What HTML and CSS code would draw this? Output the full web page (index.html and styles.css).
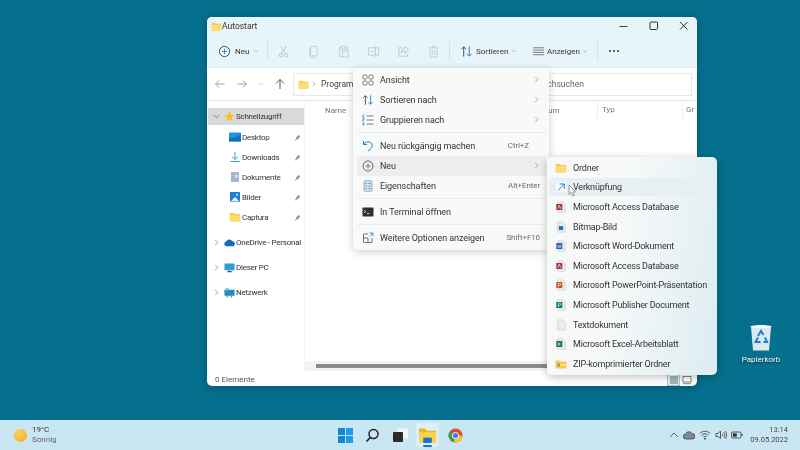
FILE: index.html
```html
<!DOCTYPE html>
<html lang="de">
<head>
<meta charset="utf-8">
<title>Autostart</title>
<link rel="stylesheet" href="styles.css">
</head>
<body>
<svg class="defs" width="0" height="0">
  <symbol id="folder" viewBox="0 0 16 16"><path d="M1 3.500A1 1 0 0 1 2 2.500h4l2 1.600h6a1 1 0 0 1 1 1V13a1 1 0 0 1-1 1H2a1 1 0 0 1-1-1z" fill="#f6c94e"/><path d="M1 5.600h14V13a1 1 0 0 1-1 1H2a1 1 0 0 1-1-1z" fill="#fcdc74"/></symbol>
  <symbol id="pin" viewBox="0 0 10 10"><path d="M6 1l3 3-1 .5-1.600 1.600-.2 2L4.900 7 2.500 9l-1 .2L1.800 8 3.800 5.500 2.600 4.200l2-.2L5.800 2.200z" fill="#8b8f92"/></symbol>
  <symbol id="chev" viewBox="0 0 8 8"><path d="M2.500 1l3 3-3 3" fill="none" stroke="#8a8a8a" stroke-width=".8"/></symbol>
  <symbol id="sort" viewBox="0 0 14 14"><path d="M4 12.500V2M1.500 4.500L4 2l2.500 2.500" fill="none" stroke="#444" stroke-width="1"/><path d="M10 1.500V12M7.500 9.500L10 12l2.500-2.500" fill="none" stroke="#1784c9" stroke-width="1"/></symbol>
  <symbol id="file" viewBox="0 0 14 14"><path d="M3 1h6l3 3v9H3z" fill="#e9ecef" stroke="#c5cacd" stroke-width=".6"/></symbol>
</svg>
<div class="desktop">
  <section class="window">
    <header class="titlebar">
      <svg class="ico11"><use href="#folder"/></svg>
      <span class="title">Autostart</span>
      <div class="winctrls">
        <svg class="ico12" viewBox="0 0 12 12"><path d="M1.500 6.500h8" stroke="#444" stroke-width="1"/></svg>
        <svg class="ico12" viewBox="0 0 12 12"><rect x="2" y="2" width="7.500" height="7.500" rx="1" fill="none" stroke="#333" stroke-width="1"/></svg>
        <svg class="ico12" viewBox="0 0 12 12"><path d="M2 2l7.500 7.500M9.500 2L2 9.500" stroke="#333" stroke-width="1"/></svg>
      </div>
    </header>
    <div class="toolbar">
      <div class="tool new">
        <svg class="ico13" viewBox="0 0 14 14"><circle cx="7" cy="7" r="5.500" fill="none" stroke="#333" stroke-width=".9"/><path d="M7 4.200v5.600M4.200 7h5.600" stroke="#1177bb" stroke-width=".9"/></svg>
        <span>Neu</span><svg class="caret" viewBox="0 0 8 8"><path d="M1.500 3l2.500 2.500L6.500 3" fill="none" stroke="#999" stroke-width=".8"/></svg>
      </div>
      <i class="vsep"></i>
      <div class="disabled">
        <svg class="ico13" viewBox="0 0 14 14"><circle cx="4" cy="11" r="1.800" fill="none" stroke="#a9c4d2"/><circle cx="10" cy="11" r="1.800" fill="none" stroke="#a9c4d2"/><path d="M4.800 9.500L10 1.500M9.200 9.500L4 1.500" stroke="#a9c4d2" fill="none"/></svg>
        <svg class="ico13" viewBox="0 0 14 14"><rect x="4" y="1.500" width="7" height="10" rx="2" fill="none" stroke="#b4ccd8"/><path d="M3 3.500v8.500a1 1 0 0 0 1 1h5" fill="none" stroke="#b4ccd8"/></svg>
        <svg class="ico13" viewBox="0 0 14 14"><path d="M4.500 3H2.500v9.500h3M9.500 3h2v3" fill="none" stroke="#b4ccd8"/><rect x="4.500" y="1.500" width="5" height="3" fill="none" stroke="#b4ccd8"/><rect x="6" y="6.500" width="6" height="6.500" fill="none" stroke="#b4ccd8"/></svg>
        <svg class="ico13" viewBox="0 0 14 14"><path d="M9 3H1.500v8H9M9 1v12M9 3h3.500v8H9" fill="none" stroke="#b4ccd8"/><path d="M4 7h3" stroke="#b4ccd8"/></svg>
        <svg class="ico13" viewBox="0 0 14 14"><path d="M5.500 3H2v9h9V9M8.500 1.500l4 3.500-4 3.500V6.500C6.500 6.500 5 7.500 4.500 9 4.500 6 6 3.800 8.500 3.500z" fill="none" stroke="#a9c8da"/></svg>
        <svg class="ico13" viewBox="0 0 14 14"><path d="M2 3h10M5.500 3V1.500h3V3M3 3l.5 10h7L11 3M5.700 5.500v5M8.300 5.500v5" fill="none" stroke="#b4ccd8"/></svg>
      </div>
      <i class="vsep"></i>
      <div class="tool sorttool">
        <svg class="ico13"><use href="#sort"/></svg><span>Sortieren</span><svg class="caret" viewBox="0 0 8 8"><path d="M1.500 3l2.500 2.500L6.500 3" fill="none" stroke="#999" stroke-width=".8"/></svg>
      </div>
      <div class="tool view">
        <svg class="ico13" viewBox="0 0 14 14"><path d="M1 3h12M1 5.500h12M1 8h12M1 10.500h12" stroke="#555" stroke-width=".8"/></svg><span>Anzeigen</span><svg class="caret" viewBox="0 0 8 8"><path d="M1.500 3l2.500 2.500L6.500 3" fill="none" stroke="#999" stroke-width=".8"/></svg>
      </div>
      <i class="vsep"></i>
      <span class="more"><i></i><i></i><i></i></span>
    </div>
    <nav class="addressrow">
      <svg class="navico faint" viewBox="0 0 12 12"><path d="M10.500 6H1.500M5 2.500L1.500 6 5 9.500" fill="none" stroke="#999" stroke-width=".9"/></svg>
      <svg class="navico faint" viewBox="0 0 12 12"><path d="M1.500 6h9M7 2.500L10.500 6 7 9.500" fill="none" stroke="#999" stroke-width=".9"/></svg>
      <svg class="navcaret" viewBox="0 0 8 8"><path d="M1.500 3l2.500 2.500L6.500 3" fill="none" stroke="#aaa" stroke-width=".8"/></svg>
      <svg class="navico" viewBox="0 0 12 12"><path d="M6 11V1.500M2 5.500l4-4 4 4" fill="none" stroke="#555" stroke-width="1"/></svg>
      <div class="addressbox">
        <svg class="ico11 boxfolder"><use href="#folder"/></svg>
        <svg class="crumb"><use href="#chev"/></svg>
        <span>Programme</span>
        <span class="search">Autostart durchsuchen</span>
      </div>
    </nav>
    <div class="body">
      <aside class="sidebar">
        <div class="tree quick">
          <svg class="treechev" viewBox="0 0 8 8"><path d="M1 2.500l3 3 3-3" fill="none" stroke="#555" stroke-width=".8"/></svg>
          <svg class="ico11" viewBox="0 0 12 12"><path d="M6 .8l1.600 3.400 3.700.5-2.700 2.600.7 3.700L6 9.200 2.700 11l.7-3.700L.7 4.700l3.700-.5z" fill="#f9bf1f"/></svg>
          <span>Schnellzugriff</span>
        </div>
        <div class="sub">
          <svg class="ico12" viewBox="0 0 12 12"><rect x="0" y="1.500" width="12" height="9" rx=".8" fill="#2196d6"/><path d="M0 7c4 0 8-1 12-4v7.500H0z" fill="#0f73b8"/></svg>
          <span>Desktop</span><svg class="pin"><use href="#pin"/></svg>
        </div>
        <div class="sub">
          <svg class="ico12" viewBox="0 0 12 12"><path d="M6 1v7M3 5.500L6 8.500l3-3" fill="none" stroke="#2aa3b8" stroke-width="1"/><path d="M1.500 10.500h9" stroke="#2aa3b8" stroke-width="1.200"/></svg>
          <span>Downloads</span><svg class="pin"><use href="#pin"/></svg>
        </div>
        <div class="sub">
          <svg class="ico12" viewBox="0 0 12 12"><rect x="2" y="1" width="8" height="10" rx=".6" fill="#a6b7cc"/><rect x="6" y="4" width="2.500" height="2.500" fill="#e4e9f0"/></svg>
          <span>Dokumente</span><svg class="pin"><use href="#pin"/></svg>
        </div>
        <div class="sub">
          <svg class="ico12" viewBox="0 0 12 12"><rect x="1" y="1" width="10" height="10" rx="1" fill="#1f7fd0"/><path d="M1.500 10.500L6 6l4.500 4.500z" fill="#e3f0fb"/><circle cx="8" cy="3.800" r="1" fill="#e3f0fb"/></svg>
          <span>Bilder</span><svg class="pin"><use href="#pin"/></svg>
        </div>
        <div class="sub">
          <svg class="ico12"><use href="#folder"/></svg>
          <span>Captura</span><svg class="pin"><use href="#pin"/></svg>
        </div>
        <div class="tree far">
          <svg class="treechev" viewBox="0 0 8 8"><path d="M2.500 1l3 3-3 3" fill="none" stroke="#777" stroke-width=".8"/></svg>
          <svg class="ico11" viewBox="0 0 12 12"><path d="M3 10a2.500 2.500 0 0 1-.4-5A3.500 3.500 0 0 1 9 4.600 2.700 2.700 0 0 1 9.300 10z" fill="#0f6cc0"/></svg>
          <span>OneDrive - Personal</span>
        </div>
        <div class="tree far">
          <svg class="treechev" viewBox="0 0 8 8"><path d="M2.500 1l3 3-3 3" fill="none" stroke="#777" stroke-width=".8"/></svg>
          <svg class="ico11" viewBox="0 0 12 12"><rect x=".5" y="1.500" width="11" height="7.500" rx=".6" fill="#2a9fd6"/><path d="M3.500 10.500h5" stroke="#46606e" stroke-width="1.200"/><path d="M5.500 9h1v1.500h-1z" fill="#46606e"/></svg>
          <span>Dieser PC</span>
        </div>
        <div class="tree far">
          <svg class="treechev" viewBox="0 0 8 8"><path d="M2.500 1l3 3-3 3" fill="none" stroke="#777" stroke-width=".8"/></svg>
          <svg class="ico11" viewBox="0 0 12 12"><rect x=".5" y="3" width="11" height="6.500" rx=".5" fill="#1e8fc6"/><rect x="2" y="1" width="3" height="3" fill="#6fbfe3"/><path d="M3.500 9.500v2M8 9.500v2" stroke="#46606e"/></svg>
          <span>Netzwerk</span>
        </div>
      </aside>
      <main class="files">
        <div class="columns">
          <span class="colname">Name</span>
          <span class="coldate">um</span>
          <span class="coltype">Typ</span>
          <span class="colsize">Gr</span>
        </div>
        <div class="scrollarea"></div>
        <div class="hscroll"><i></i></div>
      </main>
    </div>
    <footer class="status">
      <span>0 Elemente</span>
      <div class="viewbtns">
        <span class="viewon"><svg class="ico10" viewBox="0 0 10 10"><path d="M1 2h8M1 4h8M1 6h8M1 8h8" stroke="#555" stroke-width=".8"/></svg></span>
        <span class="viewoff"><svg class="ico10" viewBox="0 0 10 10"><rect x="1" y="1.500" width="8" height="5.500" fill="none" stroke="#666" stroke-width=".8"/><path d="M1 8.700h8" stroke="#666" stroke-width=".8"/></svg></span>
      </div>
    </footer>
  </section>

  <div class="menu">
    <div class="mrow"><svg class="mico" viewBox="0 0 12 12"><g fill="none" stroke="#555" stroke-width=".8"><rect x="1" y="1" width="4" height="4" rx="1.300"/><rect x="7" y="1" width="4" height="4" rx="1.300"/><rect x="1" y="7" width="4" height="4" rx="1.300"/><rect x="7" y="7" width="4" height="4" rx="1.300"/></g></svg><span class="mtext">Ansicht</span><svg class="mchev"><use href="#chev"/></svg></div>
    <div class="mrow"><svg class="mico"><use href="#sort"/></svg><span class="mtext">Sortieren nach</span><svg class="mchev"><use href="#chev"/></svg></div>
    <div class="mrow"><svg class="mico" viewBox="0 0 12 12"><path d="M4.500 2h7M4.500 6h7M4.500 10h7" stroke="#555" stroke-width=".8"/><path d="M2.500 1H1v3h1.500M2.500 5H1v3M2.500 9H1v2h1.500" fill="none" stroke="#1784c9" stroke-width=".8"/></svg><span class="mtext">Gruppieren nach</span><svg class="mchev"><use href="#chev"/></svg></div>
    <hr class="msep">
    <div class="mrow"><svg class="mico" viewBox="0 0 12 12"><path d="M1.500 1v3.500H5" fill="none" stroke="#1784c9"/><path d="M1.700 4.300C3 2.500 5 1.500 7.500 2c3 .7 3.500 4.500 1.500 6.500L6 11" fill="none" stroke="#1784c9"/></svg><span class="mtext">Neu rückgängig machen</span><span class="kbd undo">Ctrl+Z</span></div>
    <div class="mrow hover"><svg class="mico" viewBox="0 0 12 12"><circle cx="6" cy="6" r="5" fill="none" stroke="#444" stroke-width=".8"/><path d="M6 3.500v5M3.500 6h5" stroke="#1177bb" stroke-width=".8"/></svg><span class="mtext">Neu</span><svg class="mchev"><use href="#chev"/></svg></div>
    <div class="mrow"><svg class="mico" viewBox="0 0 12 12"><rect x="2" y=".8" width="8" height="10.400" rx=".8" fill="#d8e6f2" stroke="#6f93ae" stroke-width=".7"/><path d="M3.500 3.500h1.500M6.500 3.500h2M3.500 6h1.500M6.500 6h2M3.500 8.500h1.500M6.500 8.500h2" stroke="#1e77b8" stroke-width=".8"/></svg><span class="mtext">Eigenschaften</span><span class="kbd">Alt+Enter</span></div>
    <hr class="msep">
    <div class="mrow"><svg class="mico" viewBox="0 0 12 12"><rect x=".5" y="1.500" width="11" height="9" rx=".7" fill="#2d3035"/><path d="M2 4l1.800 1.500L2 7M5 7.500h2.500" fill="none" stroke="#e8e8e8" stroke-width=".8"/></svg><span class="mtext">In Terminal öffnen</span></div>
    <hr class="msep">
    <div class="mrow"><svg class="mico" viewBox="0 0 12 12"><path d="M6 2H1.500v8.500H10V6M1.500 6H6v4.500" fill="none" stroke="#555" stroke-width=".8"/><path d="M7.500 1h3.500v3.500M11 1L7.500 4.500" fill="none" stroke="#1784c9" stroke-width=".8"/></svg><span class="mtext">Weitere Optionen anzeigen</span><span class="kbd">Shift+F10</span></div>
  </div>

  <div class="submenu">
    <div class="srow"><svg class="sico"><use href="#folder"/></svg><span>Ordner</span></div>
    <div class="srow hover"><svg class="sico" viewBox="0 0 12 12"><rect x="1" y="1" width="10" height="10" fill="#f7fbfd"/><path d="M3 9.500L9 3.500M4.500 3H9.300v4.800" fill="none" stroke="#1784c9" stroke-width="1"/></svg><span>Verknüpfung</span></div>
    <div class="srow"><svg class="sico" viewBox="0 0 14 14"><use href="#file"/><rect x="1.500" y="3.500" width="7" height="7" fill="#a4373a"/><path d="M3.300 9L5 5l1.700 4" fill="none" stroke="#fff" stroke-width=".8"/></svg><span>Microsoft Access Database</span></div>
    <div class="srow"><svg class="sico" viewBox="0 0 14 14"><use href="#file"/><rect x="4.500" y="6" width="5" height="4.500" fill="#1d6fb8"/></svg><span>Bitmap-Bild</span></div>
    <div class="srow"><svg class="sico" viewBox="0 0 14 14"><use href="#file"/><rect x="1.500" y="3.500" width="7" height="7" fill="#2b64b4"/><path d="M3 5.500l1 3.500 1-2.500 1 2.500 1-3.500" fill="none" stroke="#fff" stroke-width=".6"/></svg><span>Microsoft Word-Dokument</span></div>
    <div class="srow"><svg class="sico" viewBox="0 0 14 14"><use href="#file"/><rect x="1.500" y="3.500" width="7" height="7" fill="#a4373a"/><path d="M3.300 9L5 5l1.700 4" fill="none" stroke="#fff" stroke-width=".8"/></svg><span>Microsoft Access Database</span></div>
    <div class="srow"><svg class="sico" viewBox="0 0 14 14"><use href="#file"/><rect x="1.500" y="3.500" width="7" height="7" fill="#c8502b"/><path d="M4 9.500V5h1.500a1.200 1.200 0 0 1 0 2.500H4" fill="none" stroke="#fff" stroke-width=".7"/></svg><span>Microsoft PowerPoint-Präsentation</span></div>
    <div class="srow"><svg class="sico" viewBox="0 0 14 14"><use href="#file"/><rect x="1.500" y="3.500" width="7" height="7" fill="#0d7a80"/><path d="M4 9.500V5h1.500a1.200 1.200 0 0 1 0 2.500H4" fill="none" stroke="#fff" stroke-width=".7"/></svg><span>Microsoft Publisher Document</span></div>
    <div class="srow"><svg class="sico" viewBox="0 0 14 14"><use href="#file"/></svg><span>Textdokument</span></div>
    <div class="srow"><svg class="sico" viewBox="0 0 14 14"><use href="#file"/><rect x="1.500" y="3.500" width="7" height="7" fill="#1f7a47"/><path d="M3.300 5.300l2.600 3.600M5.900 5.300L3.300 8.900" fill="none" stroke="#fff" stroke-width=".7"/></svg><span>Microsoft Excel-Arbeitsblatt</span></div>
    <div class="srow"><svg class="sico" viewBox="0 0 12 12"><path d="M.5 3a.6.6 0 0 1 .6-.6h3l1.300 1h5.500a.6.6 0 0 1 .6.600V10a.6.6 0 0 1-.6.6H1.100a.6.6 0 0 1-.6-.6z" fill="#f6c94e"/><path d="M.5 6.300h11v1.200H.5z" fill="#fdeaa8"/><rect x="2" y="5.500" width="3" height="3" fill="#9a9a8a"/></svg><span>ZIP-komprimierter Ordner</span></div>
  </div>

  <svg class="cursor" viewBox="0 0 8 13"><path d="M1 1v9.500l2.300-2 1.500 3.300 1.500-.7L4.900 8l2.800-.2z" fill="#f4f4f4" stroke="#666" stroke-width=".6"/></svg>

  <div class="recycle">
    <svg class="bin" viewBox="0 0 24 28"><path d="M2 3l2 23.500h16L22 3z" fill="#dbe9ef"/><path d="M1 2.500c4-2 18-2 22 0-4 2-18 2-22 0z" fill="#f7fbfc"/><g fill="none" stroke="#1a7fd8" stroke-width="2"><path d="M9 12l3-5 2.500 4"/><path d="M9 13.500l-2.500 4.500h5"/><path d="M14.500 18H18l-2-4.500"/></g></svg>
    <span>Papierkorb</span>
  </div>

  <footer class="taskbar">
    <div class="weather">
      <span class="sun"></span>
      <div class="wtext"><b>19°C</b><span>Sonnig</span></div>
    </div>
    <div class="apps">
      <span class="app"><svg class="ico15" viewBox="0 0 15 15"><g fill="#1383d4"><rect x="0" y="0" width="7" height="7"/><rect x="0" y="8" width="7" height="7"/></g><g fill="#1f9be6"><rect x="8" y="0" width="7" height="7"/><rect x="8" y="8" width="7" height="7"/></g></svg></span>
      <span class="app"><svg class="ico15" viewBox="0 0 15 15"><circle cx="8.500" cy="6" r="4.500" fill="none" stroke="#222" stroke-width="1.500"/><path d="M5.300 9.500L1.500 13.500" stroke="#222" stroke-width="1.800"/></svg></span>
      <span class="app"><svg class="ico15" viewBox="0 0 15 15"><rect x="4" y="0.500" width="11" height="10" rx="1" fill="#f1f5f7"/><rect x="0" y="4" width="10" height="10" rx="1" fill="#2b2b2b"/></svg></span>
      <span class="app active"><svg class="ico16" viewBox="0 0 16 16"><path d="M0 2.500a1 1 0 0 1 1-1h4.500l2 2H15a1 1 0 0 1 1 1V6H0z" fill="#eeb51f"/><rect x="0" y="5" width="16" height="10" rx="1" fill="#fcd34f"/><rect x="4" y="10" width="8" height="5" fill="#1976c4"/></svg><i></i></span>
      <span class="app"><svg class="ico15" viewBox="0 0 16 16"><circle cx="8" cy="8" r="7.500" fill="#e1483a"/><path d="M8 8L1.500 4.200a7.500 7.500 0 0 0 5 11z" fill="#2fa84f"/><path d="M8 8h7.500a7.500 7.500 0 0 1-9 7.300z" fill="#f7c52b"/><circle cx="8" cy="8" r="3.600" fill="#fff"/><circle cx="8" cy="8" r="2.800" fill="#3a82ea"/></svg></span>
    </div>
    <div class="tray">
      <svg class="ico10" viewBox="0 0 10 10"><path d="M1 7l4-4 4 4" fill="none" stroke="#444" stroke-width=".8"/></svg>
      <svg class="ico12" viewBox="0 0 12 12"><path d="M3 10a2.500 2.500 0 0 1-.4-5A3.500 3.500 0 0 1 9 4.600 2.700 2.700 0 0 1 9.300 10z" fill="#7e8b90" stroke="#333" stroke-width=".7"/></svg>
      <svg class="ico12" viewBox="0 0 12 12"><path d="M.8 4.500c3-3 7.400-3 10.400 0M2.600 6.300c2-2 4.800-2 6.800 0M4.300 8c1-1 2.400-1 3.400 0" fill="none" stroke="#333" stroke-width=".8"/><circle cx="6" cy="9.700" r=".9" fill="#333"/></svg>
      <svg class="ico12" viewBox="0 0 12 12"><path d="M1 4.500v3h2l2.500 2v-7.500L3 4.500z" fill="none" stroke="#333" stroke-width=".8"/><path d="M7.200 4.500c.7 1 .7 2 0 3M8.800 3c1.300 2 1.300 4 0 6M10.400 2c1.600 2.500 1.600 5.500 0 8" fill="none" stroke="#333" stroke-width=".7"/></svg>
      <svg class="ico12" viewBox="0 0 12 12"><rect x=".5" y="3" width="9.500" height="6" rx="1.200" fill="none" stroke="#333" stroke-width=".8"/><rect x="1.800" y="4.300" width="4" height="3.400" fill="#333"/><path d="M11 5v2" stroke="#333"/></svg>
      <div class="clock"><span>13:14</span><span>09.05.2022</span></div>
    </div>
  </footer>
</div>
</body>
</html>
```
FILE: styles.css
```css
* { box-sizing: border-box; }
html, body { margin: 0; padding: 0; height: 100%; overflow: hidden; }
body { font-family: Roboto, "Open Sans", sans-serif; font-size: 8.500px; color: #333; }
svg { display: block; flex: none; }
.defs { position: absolute; }
.desktop { position: relative; width: 800px; height: 450px; background: #05708d; overflow: hidden; filter: blur(.3px); }

.ico10 { width: 10px; height: 10px; }
.ico11 { width: 11px; height: 11px; }
.ico12 { width: 12px; height: 12px; }
.ico13 { width: 13px; height: 13px; }
.ico15 { width: 15px; height: 15px; }
.ico16 { width: 17px; height: 17px; }

.window { position: absolute; left: 207px; top: 17px; width: 490px; height: 369px; background: #fff; border-radius: 5px; overflow: hidden; display: flex; flex-direction: column; box-shadow: 0 2px 8px rgba(0, 40, 60, .35); }
.titlebar { height: 18px; background: #e7f5fb; display: flex; align-items: center; padding: 0 7px 0 4px; }
.title { color: #333; }
.winctrls { margin-left: auto; display: flex; gap: 18px; }
.toolbar { height: 33px; background: #e7f5fb; border-bottom: 1px solid #dfeaef; display: flex; align-items: center; padding: 0 0 0 11px; }
.tool { display: flex; align-items: center; gap: 4px; font-size: 8px; }
.caret { width: 6px; height: 6px; }
.new { width: 49px; }
.vsep { display: block; width: 1px; height: 20px; background: #d3e2e9; }
.disabled { display: flex; gap: 17px; padding: 0 9px; }
.sorttool { width: 72px; margin-left: 10px; gap: 3px; }
.view { width: 65px; gap: 2px; }
.more { display: flex; gap: 2px; margin-left: 11px; }
.more i { width: 2px; height: 2px; background: #333; border-radius: 50%; }

.addressrow { height: 33px; border-bottom: 1px solid #e6e6e6; display: flex; align-items: center; padding: 0 5px 0 7px; }
.navico { width: 12px; height: 12px; }
.faint { margin-right: 10px; }
.navcaret { width: 6px; height: 6px; margin-right: 10px; }
.addressbox { flex: 1; margin-left: 7px; height: 23px; border: 1px solid #e8e8e8; display: flex; align-items: center; padding-left: 4px; font-size: 8.500px; color: #444; white-space: nowrap; }
.boxfolder { margin-right: 2px; }
.crumb { width: 6px; height: 6px; margin-right: 4px; }
.search { margin-left: 132px; color: #666; }

.body { flex: 1; display: flex; min-height: 0; }
.sidebar { width: 98px; padding: 7px 0 0 1px; border-right: 1px solid #f4f4f4; }
.tree, .sub { display: flex; align-items: center; font-size: 8px; letter-spacing: -.25px; white-space: nowrap; }
.tree { padding-left: 5px; gap: 1px; }
.treechev { width: 7px; height: 7px; margin-right: 3px; }
.quick { background: #d9d9d9; height: 17px; margin-bottom: 2px; }
.sub { height: 20px; padding-left: 21px; gap: 1px; }
.sub .pin { width: 7px; height: 7px; margin-left: auto; margin-right: 3px; }
.far { height: 25px; }
.sub + .far { margin-top: 3px; }
.files { flex: 1; display: flex; flex-direction: column; min-width: 0; }
.columns { height: 18px; display: flex; align-items: center; color: #777; font-size: 8px; }
.colname { margin-left: 20px; width: 223px; }
.coldate { width: 49px; }
.coltype { width: 85px; padding-left: 4px; height: 18px; line-height: 18px; border-left: 1px solid #eee; }
.colsize { padding-left: 3px; height: 18px; line-height: 18px; border-left: 1px solid #eee; }
.scrollarea { flex: 1; }
.hscroll { height: 10px; background: #f3f3f3; padding: 3px 0 3px 11px; margin-bottom: 2px; }
.hscroll i { display: block; width: 240px; height: 4px; background: #8a8a8a; }
.status { height: 13px; display: flex; align-items: center; justify-content: space-between; padding-left: 8px; font-size: 8px; color: #555; }
.viewbtns { display: flex; margin-right: 4px; height: 13px; }
.viewon, .viewoff { width: 13px; display: flex; align-items: center; justify-content: center; }
.viewon { background: #e0f0f6; border: 1px solid #9fc7d6; }

.menu { position: absolute; left: 353px; top: 68px; width: 196px; height: 182px; padding: 1.500px 3px 0 4px; background: #f8f9f9; border-radius: 5px; box-shadow: 0 2px 8px rgba(0, 0, 0, .2); font-size: 9px; letter-spacing: -.1px; z-index: 2; }
.mrow { height: 20px; display: flex; align-items: center; padding: 0 6px 0 5px; border-radius: 3px; white-space: nowrap; color: #333; }
.mrow.hover { background: #eeeeef; }
.mico { width: 12px; height: 12px; margin-right: 6px; }
.mchev { width: 7px; height: 7px; margin-left: auto; }
.kbd { margin-left: auto; font-size: 8px; color: #6b6b6b; }
.kbd.undo { margin-right: 11px; }
.msep { height: 1px; border: 0; margin: 2px 0 3px; background: #ececec; }

.submenu { position: absolute; left: 547px; top: 157px; width: 170px; height: 218px; padding: 1px 2px 0; background: linear-gradient(100deg, #f7f9f9 40%, #dcecf1 100%); border-radius: 5px; box-shadow: 0 2px 8px rgba(0, 0, 0, .25); font-size: 9px; letter-spacing: -.2px; z-index: 3; }
.srow { height: 19.600px; display: flex; align-items: center; padding-left: 6px; gap: 6px; color: #333; white-space: nowrap; border-radius: 3px; }
.srow.hover { background: #e6eff2; height: 18px; margin: .8px 0; }
.sico { width: 12px; height: 12px; }
.cursor { position: absolute; left: 568px; top: 184px; width: 8px; height: 13px; z-index: 4; }

.recycle { position: absolute; left: 736px; top: 324px; width: 50px; display: flex; flex-direction: column; align-items: center; gap: 3px; color: #fff; font-size: 8px; text-shadow: 0 1px 2px rgba(0, 0, 0, .7); }
.bin { width: 24px; height: 28px; }

.taskbar { position: absolute; left: 0; right: 0; bottom: 0; height: 30px; background: #c9e7f3; display: grid; grid-template-columns: 1fr auto 1fr; align-items: center; }
.weather { display: flex; align-items: center; gap: 5px; padding-left: 14px; }
.sun { width: 13px; height: 13px; border-radius: 50%; background: radial-gradient(circle at 40% 35%, #ffd35e, #f5a81c); }
.wtext { display: flex; flex-direction: column; font-size: 8px; line-height: 10px; }
.wtext b { font-weight: 400; color: #333; }
.wtext span { color: #666; }
.apps { display: flex; align-items: center; gap: 4.500px; }
.app { position: relative; width: 23px; height: 24px; display: flex; align-items: center; justify-content: center; border-radius: 3px; }
.app.active { background: #dceff7; }
.app.active i { position: absolute; left: 7px; bottom: 0; width: 9px; height: 2px; background: #1976c4; border-radius: 1px; }
.tray { display: flex; align-items: center; justify-content: flex-end; gap: 4px; padding-right: 12px; }
.clock { display: flex; flex-direction: column; align-items: flex-end; margin-left: 3px; font-size: 7.500px; line-height: 10px; color: #444; }
```
